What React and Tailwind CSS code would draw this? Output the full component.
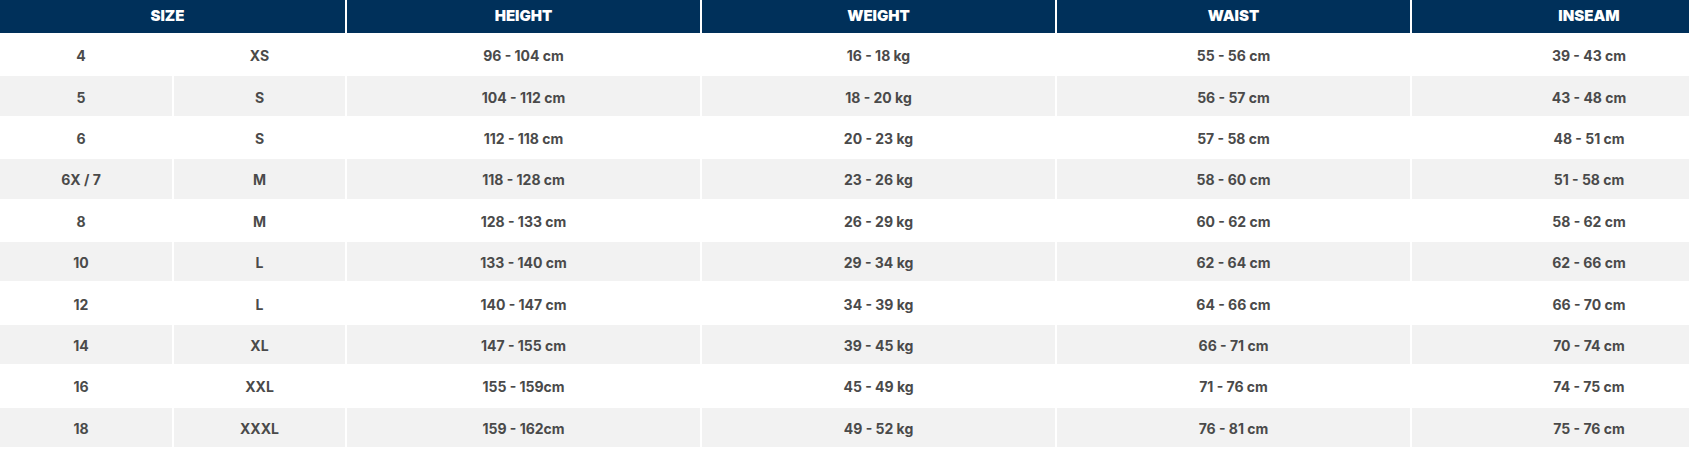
import React from "react";

const rows = [
  ["4", "XS", "96 - 104 cm", "16 - 18 kg", "55 - 56 cm", "39 - 43 cm"],
  ["5", "S", "104 - 112 cm", "18 - 20 kg", "56 - 57 cm", "43 - 48 cm"],
  ["6", "S", "112 - 118 cm", "20 - 23 kg", "57 - 58 cm", "48 - 51 cm"],
  ["6X / 7", "M", "118 - 128 cm", "23 - 26 kg", "58 - 60 cm", "51 - 58 cm"],
  ["8", "M", "128 - 133 cm", "26 - 29 kg", "60 - 62 cm", "58 - 62 cm"],
  ["10", "L", "133 - 140 cm", "29 - 34 kg", "62 - 64 cm", "62 - 66 cm"],
  ["12", "L", "140 - 147 cm", "34 - 39 kg", "64 - 66 cm", "66 - 70 cm"],
  ["14", "XL", "147 - 155 cm", "39 - 45 kg", "66 - 71 cm", "70 - 74 cm"],
  ["16", "XXL", "155 - 159cm", "45 - 49 kg", "71 - 76 cm", "74 - 75 cm"],
  ["18", "XXXL", "159 - 162cm", "49 - 52 kg", "76 - 81 cm", "75 - 76 cm"],
];

const headers = ["HEIGHT", "WEIGHT", "WAIST", "INSEAM"];

const App = () => {
  return (
    <div className="w-[1689px] h-[468px] bg-white overflow-hidden font-['Inter','Liberation_Sans',sans-serif]">
      <div className="-ml-[10px] w-[1786px] grid grid-cols-[182px_171px_353px_353px_353px_354px] gap-[2px]">
        <div className="col-span-2 h-[33px] bg-[#00305a] text-white text-[15px] font-black flex justify-center items-center">
          SIZE
        </div>
        {headers.map((h) => (
          <div
            key={h}
            className="h-[33px] bg-[#00305a] text-white text-[15px] font-black flex justify-center items-center"
          >
            {h}
          </div>
        ))}

        {rows.map((row, index) =>
          row.map((cell, i) => (
            <div
              key={index + "-" + i}
              className={
                "h-[39.4px] pt-[2px] flex justify-center items-center text-[14px] font-bold text-[#4a4a4a] " +
                (index % 2 === 1 ? "bg-[#f2f2f2]" : "bg-white")
              }
            >
              {cell}
            </div>
          ))
        )}
      </div>
    </div>
  );
};

export default App;
